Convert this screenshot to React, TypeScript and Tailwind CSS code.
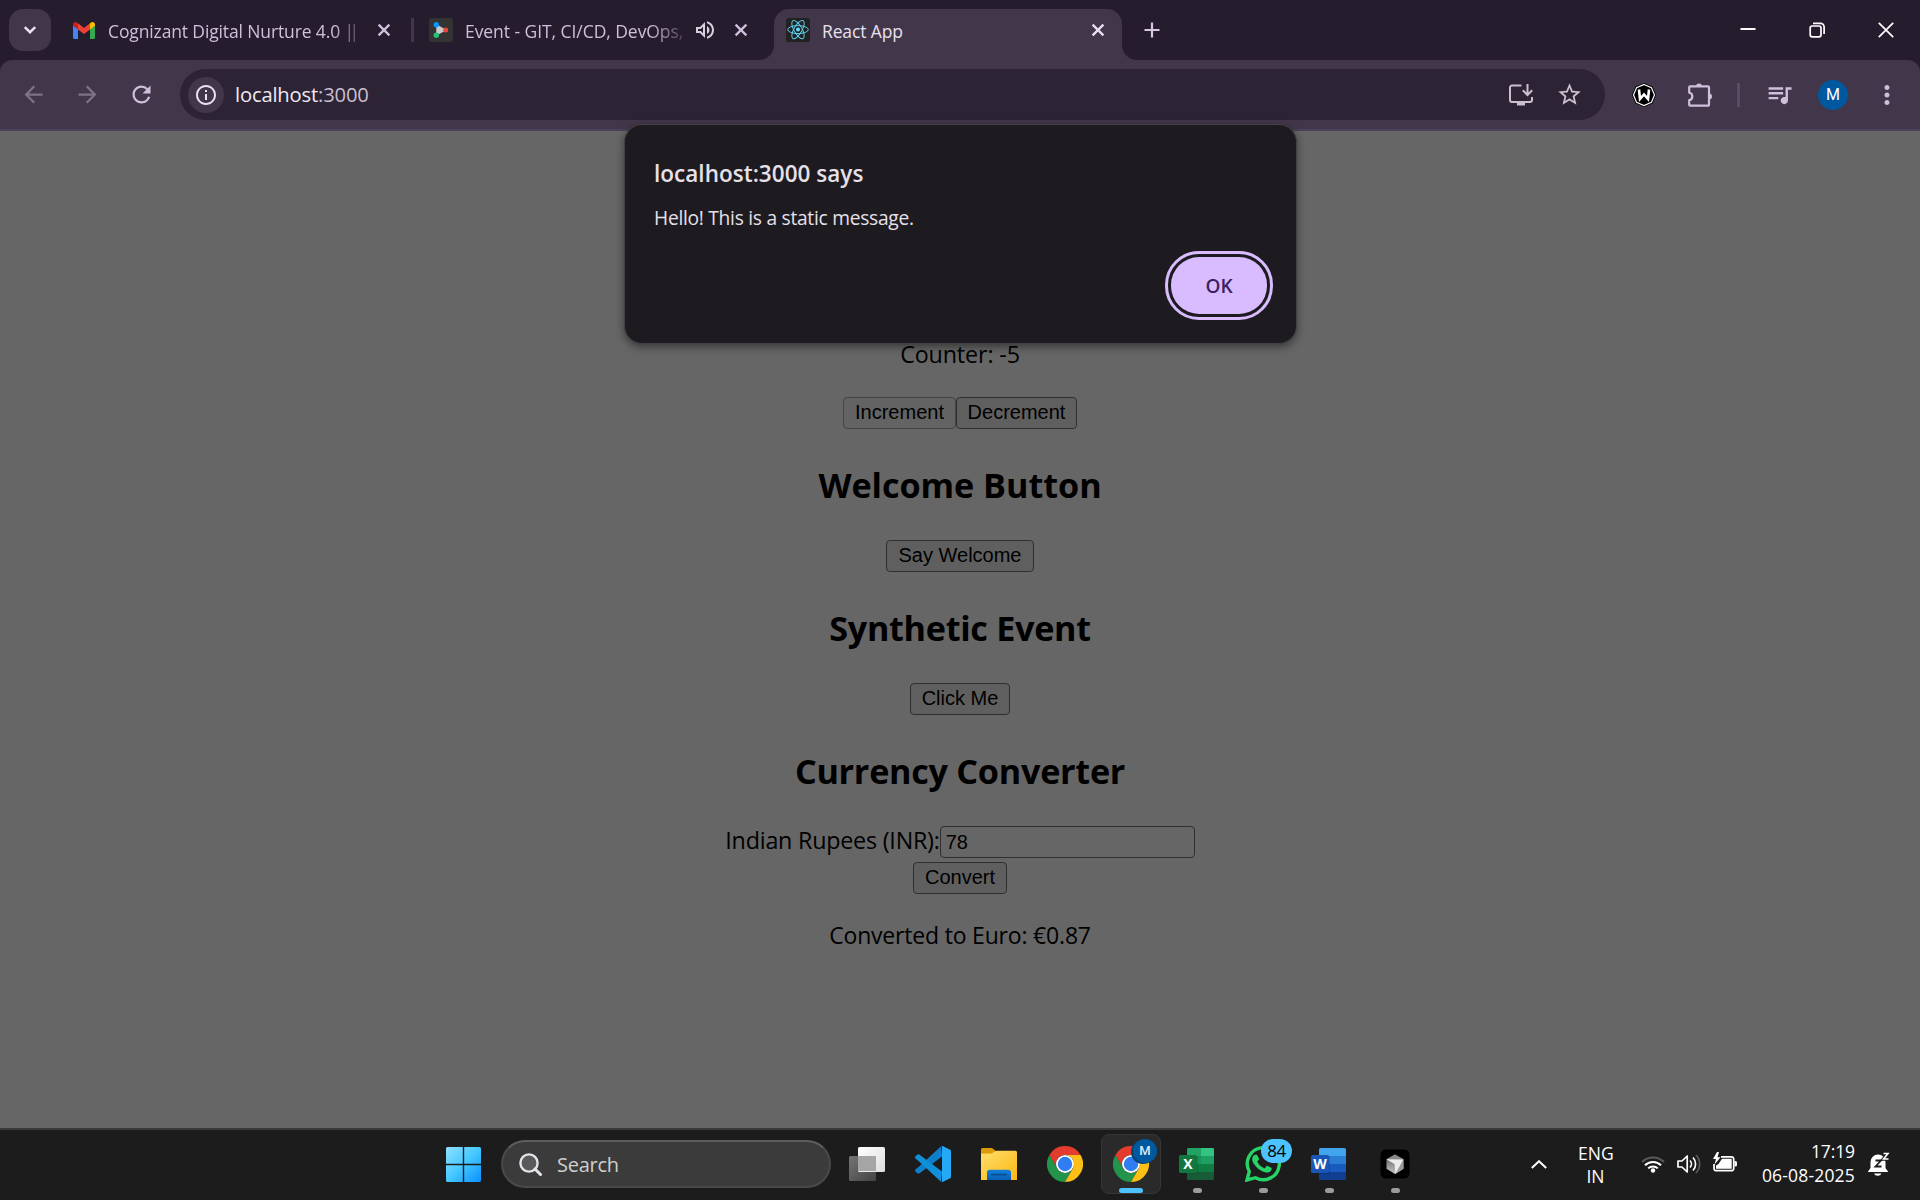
import type { ReactNode } from "react";
import {
  MdArrowBack,
  MdArrowForward,
  MdInfoOutline,
  MdMoreVert,
  MdOutlineVolumeUp,
  MdQueueMusic,
  MdRefresh,
  MdStarBorder,
} from "react-icons/md";

function CloseIcon({ className }: { className: string }) {
  return (
    <svg viewBox="0 0 12 12" className={`size-3 shrink-0 overflow-visible ${className}`} fill="none" stroke="currentColor" strokeWidth="2.3">
      <path d="M.6.6 11.4 11.4M11.4.6.6 11.4" />
    </svg>
  );
}

function GmailIcon() {
  return (
    <svg viewBox="0 0 22 17" className="h-[17px] w-[22px] shrink-0">
      <path d="M0 3.5 5 6.8V17H1.5A1.5 1.5 0 0 1 0 15.500Z" fill="#4285f4" />
      <path d="M22 3.500 17 6.800V17h3.500a1.500 1.500 0 0 0 1.500-1.500Z" fill="#34a853" />
      <path d="M17 1.300 11 5.900 5 1.300V7.400l6 4.600 6-4.600Z" fill="#ea4335" />
      <path d="M0 2.500V3.700L5 7.400V1.300L4 .6C2.300-.7 0 .4 0 2.500Z" fill="#c5221f" />
      <path d="M22 2.500V3.700L17 7.400V1.300L18 .6C19.700-.7 22 .4 22 2.500Z" fill="#fbbc04" />
    </svg>
  );
}

function EventIcon() {
  return (
    <svg viewBox="0 0 24 24" className="size-6 shrink-0">
      <rect width="24" height="24" rx="2" fill="#333" />
      <path d="M8 7.500 16 12 8 16.500Z" fill="#c9c9c9" stroke="#c9c9c9" strokeWidth="1.500" />
      <circle cx="7.300" cy="6.700" r="2.700" fill="#0a95ff" />
      <circle cx="7.300" cy="17.300" r="2.700" fill="#22c476" />
      <circle cx="16.700" cy="12" r="2.500" fill="#e8453c" />
    </svg>
  );
}

function ReactLogo() {
  return (
    <svg viewBox="0 0 24 24" className="size-6 shrink-0">
      <rect width="24" height="24" rx="2.500" fill="#222" />
      <g fill="none" stroke="#5ccfee" strokeWidth="1">
        <ellipse cx="12" cy="11.600" rx="10.300" ry="4" />
        <ellipse cx="12" cy="11.600" rx="10.300" ry="4" transform="rotate(60 12 11.600)" />
        <ellipse cx="12" cy="11.600" rx="10.300" ry="4" transform="rotate(120 12 11.600)" />
      </g>
      <circle cx="12" cy="11.600" r="2" fill="#61dafb" />
    </svg>
  );
}

function InstallIcon() {
  return (
    <svg viewBox="0 0 24 22" className="h-[22px] w-6" fill="none" stroke="currentColor" strokeWidth="2">
      <path d="M12.500 1.500H3A2 2 0 0 0 1 3.500V16A2 2 0 0 0 3 18H21A2 2 0 0 0 23 16V13" />
      <path d="M18.500 0V10.500M13.800 6.300 18.500 11 23.200 6.300" />
      <path d="M8 18H16V21.500H8Z" fill="currentColor" stroke="none" />
    </svg>
  );
}

function PuzzleIcon() {
  return (
    <svg viewBox="0 0 24 24" className="size-6">
      <path
        d="M2.200 3.300H19.800A1.200 1.200 0 0 1 21 4.500V21.500A1.200 1.200 0 0 1 19.800 22.700H2.200A1 1 0 0 1 1.200 21.700V17.300A4 4 0 0 0 1.200 9.500V4.300A1 1 0 0 1 2.200 3.300Z"
        fill="none"
        stroke="currentColor"
        strokeWidth="2.200"
      />
      <path d="M8 3.500A3 3 0 0 1 14 3.500ZM21 10.400A3 3 0 0 1 21 16.400Z" fill="currentColor" />
    </svg>
  );
}

function TabStrip() {
  return (
    <div className="flex h-[60px] items-center bg-[#251c2d] text-[17.5px] tracking-[-0.13px] text-[#d0bfdb]">
      <div className="ml-[9px] grid size-[42px] shrink-0 place-items-center rounded-[14px] bg-[#42374a]">
        <svg viewBox="0 0 12 8" className="h-2 w-3" fill="none" stroke="#ece2f2" strokeWidth="2.400">
          <path d="M.8 1 6 6.200 11.200 1" />
        </svg>
      </div>
      <div className="ml-[22px] flex w-[338px] shrink-0 items-center">
        <GmailIcon />
        <span className="mt-px ml-[13px] w-[256px] shrink-0 whitespace-nowrap mask-r-from-[88%] mask-r-to-[102%] leading-6">
          Cognizant Digital Nurture 4.0 <span className="tracking-[-4.500px]">||</span>
        </span>
        <CloseIcon className="ml-[14px]" />
      </div>
      <div className="h-6 w-[3px] shrink-0 bg-[#42374a]" />
      <div className="ml-[15px] flex w-[345px] shrink-0 items-center">
        <EventIcon />
        <span className="mt-px ml-3 w-[219px] shrink-0 whitespace-nowrap mask-r-from-[84%] mask-r-to-[104%] leading-6 tracking-[-0.060px]">
          Event - GIT, CI/CD, DevOps,
        </span>
        <MdOutlineVolumeUp className="ml-[9px] size-6 shrink-0 text-[#d8cfde]" />
        <CloseIcon className="ml-[18px]" />
      </div>
      <div className="relative flex h-[51px] w-[348px] shrink-0 items-center self-end rounded-t-[15px] bg-[#42374a] pb-[9px] pl-3 text-[#e9e0ee]">
        <span className="absolute bottom-0 -left-[15px] size-[15px] bg-[radial-gradient(circle_at_0_0,#251c2d_14.500px,#42374a_15.500px)]" />
        <span className="absolute -right-[15px] bottom-0 size-[15px] bg-[radial-gradient(circle_at_100%_0,#251c2d_14.500px,#42374a_15.500px)]" />
        <ReactLogo />
        <span className="mt-px ml-3 leading-6">React App</span>
        <CloseIcon className="mr-[18px] ml-auto" />
      </div>
      <svg viewBox="0 0 16 16" className="ml-[22px] size-4" stroke="#d6c6e2" strokeWidth="2.200">
        <path d="M8 .5v15M.5 8h15" />
      </svg>
      <div className="mr-[26.500px] ml-auto flex items-center gap-[53px]">
        <svg viewBox="0 0 16 16" className="size-4" stroke="#fff" strokeWidth="2">
          <path d="M.5 7h15" />
        </svg>
        <svg viewBox="0 0 16 16" className="size-4" fill="none" stroke="#fff" strokeWidth="1.700">
          <rect x="1.200" y="4" width="10.800" height="10.800" rx="2" />
          <path d="M4 1.300h7.500a3.600 3.600 0 0 1 3.600 3.600V12" />
        </svg>
        <svg viewBox="0 0 16 16" className="size-4" stroke="#fff" strokeWidth="1.700">
          <path d="M.8.800 15.200 15.200M15.200.800.800 15.200" />
        </svg>
      </div>
    </div>
  );
}

function Toolbar() {
  return (
    <div className="bg-[#251c2d]">
      <div className="flex h-[71px] items-start rounded-t-xl border-b-2 border-[#4d4056] bg-[#42374a] pt-[9px] text-[#d0bfdb]">
        <div className="flex h-[51px] w-[180px] shrink-0 items-center gap-[27px] pl-[19.500px] text-[27px]">
          <MdArrowBack className="text-[#7e7386]" />
          <MdArrowForward className="text-[#7e7386]" />
          <MdRefresh />
        </div>
        <div className="flex h-[51px] w-[1425px] shrink-0 items-center rounded-full bg-[#2c2334] pr-[22px] pl-[8px]">
          <div className="grid size-9 place-items-center rounded-full bg-[#42374a] text-2xl text-[#e9e0ee]">
            <MdInfoOutline />
          </div>
          <span className="-mt-0.5 ml-[11px] text-[20.200px] leading-6 tracking-[-0.170px] text-[#c9bfd0]">
            <span className="text-[#f0e9f4]">localhost</span>:3000
          </span>
          <div className="ml-auto text-[#c9bfcf]">
            <InstallIcon />
          </div>
          <MdStarBorder className="ml-[23px] size-[27px] text-[#c9bfcf]" />
        </div>
        <div className="flex h-[51px] flex-1 items-center pl-[27px]">
          <svg viewBox="0 0 24 24" className="size-6">
            <path d="M12 0 20.500 3.500 24 12 20.500 20.500 12 24 3.500 20.500 0 12 3.500 3.500Z" fill="#000" />
            <path d="M12 1.500 19.400 4.600 22.500 12 19.400 19.400 12 22.500 4.600 19.400 1.500 12 4.600 4.600Z" fill="none" stroke="#fff" strokeWidth="1.200" />
            <path d="M7 6.500 8 16 12 11.500 16 16 17 6.500" fill="none" stroke="#fff" strokeWidth="2.600" />
          </svg>
          <div className="ml-8">
            <PuzzleIcon />
          </div>
          <div className="ml-[25px] h-6 w-[3px] bg-[#5a4d63]" />
          <MdQueueMusic className="ml-[25px] size-[29px]" />
          <div className="ml-[24px] grid size-[30px] place-items-center rounded-full bg-[#00589f] font-[Roboto] text-base text-white">
            M
          </div>
          <MdMoreVert className="ml-[24px] size-[30px]" />
        </div>
      </div>
    </div>
  );
}

function PageButton({ className, children }: { className: string; children: ReactNode }) {
  return (
    <button
      className={`h-8 rounded-[4px] border pb-0.5 font-['Liberation_Sans',sans-serif] text-xl leading-7 whitespace-nowrap ${className}`}
    >
      {children}
    </button>
  );
}

function Heading({ className, children }: { className: string; children: ReactNode }) {
  return <h2 className={`mt-8 mb-[31px] text-[34.200px] leading-[48px] font-bold ${className}`}>{children}</h2>;
}

function Page() {
  return (
    <main className="flex h-[997px] flex-col items-center bg-[#666] pt-[205px] text-[23.300px] text-black">
      <p className="mb-[25px] leading-9 tracking-[-0.130px]">Counter: -5</p>
      <div className="flex">
        <PageButton className="w-[113px] border-[#444] bg-[#636363]">Increment</PageButton>
        <PageButton className="w-[121px] border-[#2f2f2f] bg-[#5f5f5f]">Decrement</PageButton>
      </div>
      <Heading className="tracking-[-0.050px]">Welcome Button</Heading>
      <PageButton className="w-[148px] border-[#2f2f2f] bg-[#5f5f5f]">Say Welcome</PageButton>
      <Heading className="tracking-[-0.300px]">Synthetic Event</Heading>
      <PageButton className="w-[100px] border-[#2f2f2f] bg-[#5f5f5f]">Click Me</PageButton>
      <Heading className="tracking-[-0.270px]">Currency Converter</Heading>
      <div className="mb-1 flex items-start">
        <label className="leading-7 tracking-[-0.220px]">Indian Rupees (INR):</label>
        <div className="flex h-8 w-[255px] items-center rounded-[4px] border border-[#2f2f2f] pl-[5px] font-['Liberation_Sans',sans-serif] text-xl">
          78
        </div>
      </div>
      <PageButton className="w-[94px] border-[#2f2f2f] bg-[#5f5f5f]">Convert</PageButton>
      <p className="mt-[23px] text-[23px] leading-9 tracking-[-0.190px]">Converted to Euro: €0.87</p>
    </main>
  );
}

function AlertDialog() {
  return (
    <div
      role="alertdialog"
      className="absolute top-[124px] left-[624px] flex h-[220px] w-[673px] flex-col rounded-[18px] border border-[#434146] bg-[#1e1b20] pt-[33px] pr-[23px] pl-[29px] text-[#e6e0e9] shadow-[0_3px_8px_rgba(0,0,0,0.450)]"
    >
      <h1 className="text-[22.500px] leading-8 font-semibold tracking-[0.030px]">localhost:3000 says</h1>
      <p className="mt-[14px] text-[19.200px] leading-7 tracking-[-0.270px]">Hello! This is a static message.</p>
      <button className="mt-[19px] h-[69px] w-[108px] self-end rounded-[34px] border-[3px] border-[#d9bcff] p-[3px]">
        <span className="flex h-full items-center justify-center rounded-[28px] bg-[#d9bcff] pt-0.5 text-[19px] font-semibold text-[#3b2160]">
          OK
        </span>
      </button>
    </div>
  );
}

function WindowsLogo() {
  return (
    <svg viewBox="0 0 35 35" className="-mt-px size-[35px]">
      <defs>
        <linearGradient id="win" gradientUnits="userSpaceOnUse" x1="0" y1="0" x2="35" y2="35">
          <stop offset="0" stopColor="#8fe0ff" />
          <stop offset=".5" stopColor="#45c8ff" />
          <stop offset="1" stopColor="#0a90ff" />
        </linearGradient>
      </defs>
      <path
        fill="url(#win)"
        d="M1.500 0H16.800V16.800H0V1.500A1.500 1.500 0 0 1 1.500 0ZM18.200 0H33.500A1.500 1.500 0 0 1 35 1.500V16.800H18.200ZM0 18.200H16.800V35H1.500A1.500 1.500 0 0 1 0 33.500ZM18.200 18.200H35V33.500A1.500 1.500 0 0 1 33.500 35H18.200Z"
      />
    </svg>
  );
}

function TaskViewIcon() {
  return (
    <svg viewBox="0 0 36 36" className="size-9">
      <defs>
        <linearGradient id="tvb" x1="0" y1="0" x2="1" y2="1">
          <stop offset="0" stopColor="#757575" />
          <stop offset="1" stopColor="#434343" />
        </linearGradient>
        <linearGradient id="tvf" x1="0" y1="0" x2="1" y2="1">
          <stop offset="0" stopColor="#fff" />
          <stop offset="1" stopColor="#dedede" />
        </linearGradient>
      </defs>
      <rect x="0" y="10" width="27" height="25" rx="1.500" fill="url(#tvb)" />
      <rect x="9" y="1" width="27" height="25" rx="1.500" fill="url(#tvf)" />
      <path d="M9 10H27V25H9Z" fill="#a5a5a5" />
    </svg>
  );
}

function VsCodeIcon() {
  return (
    <svg viewBox="0 0 36 36" className="size-9">
      <path d="M26 .2 3.300 21.200 .6 23.200C-.1 24-.1 25.300.6 26l1.900 1.300c.7.500 1.500.5 2.100 0L27 10.500Z" fill="#0f7fc9" />
      <path d="M26 35.800 3.300 14.800.6 12.800C-.1 12-.1 10.700.6 10L2.500 8.700c.7-.5 1.500-.5 2.100 0L27 25.500Z" fill="#1090d8" />
      <path d="M26 .2C26.600-.1 27.300 0 28 .3L34.800 3.400C35.500 3.800 36 4.500 36 5.300V30.700c0 .8-.5 1.500-1.200 1.900L28 35.700c-.7.300-1.400.400-2 .1.600.2 1-.3 1-1V1.200C27 .5 26.600 0 26 .2Z" fill="#25a8f5" />
    </svg>
  );
}

function FolderIcon() {
  return (
    <svg viewBox="0 0 36 36" className="size-9">
      <defs>
        <linearGradient id="fld" x1="0" y1="0" x2="1" y2="1">
          <stop offset="0" stopColor="#ffdf6e" />
          <stop offset="1" stopColor="#fcb712" />
        </linearGradient>
        <linearGradient id="fldb" x1="0" y1="0" x2="0" y2="1">
          <stop offset="0" stopColor="#1380dc" />
          <stop offset="1" stopColor="#0a5fb5" />
        </linearGradient>
      </defs>
      <path d="M0 3.500A1.500 1.500 0 0 1 1.500 2H11l4 3v6H0Z" fill="#dd9a06" />
      <path d="M0 7.500H10.500L15.500 4.700H34.500A1.500 1.500 0 0 1 36 6.200V34H0Z" fill="url(#fld)" />
      <path d="M6 34V26.500A2.800 2.800 0 0 1 8.800 23.700H27.200A2.800 2.800 0 0 1 30 26.500V34Z" fill="url(#fldb)" />
      <path d="M11 28.700H25" stroke="#0b4c91" strokeWidth="1.800" strokeLinecap="round" />
    </svg>
  );
}

function ChromeIcon() {
  return (
    <svg viewBox="0 0 36 36" className="size-9">
      <path d="M18 9H33.590A18 18 0 0 0 2.410 9L10.200 22.500A9 9 0 0 1 18 9Z" fill="#e33b2e" />
      <path d="M10.200 22.500 2.410 9A18 18 0 0 0 18 36L25.790 22.500A9 9 0 0 1 10.200 22.500Z" fill="#22954a" />
      <path d="M25.790 22.500 18 36A18 18 0 0 0 33.590 9H18A9 9 0 0 1 25.790 22.500Z" fill="#fcbf16" />
      <circle cx="18" cy="18" r="9" fill="#fff" />
      <circle cx="18" cy="18" r="7.200" fill="#2f7df0" />
    </svg>
  );
}

function OfficeIcon({ letter, rows, tile, split }: { letter: string; rows: string[]; tile: string; split?: string }) {
  return (
    <svg viewBox="0 0 36 36" className="size-9">
      <defs>
        <clipPath id={`doc${letter}`}>
          <rect x="8" y="2" width="27" height="32" rx="1.500" />
        </clipPath>
      </defs>
      <g clipPath={`url(#doc${letter})`}>
        {rows.map((c, i) => (
          <rect key={c} x="8" y={2 + i * 8} width="28" height="8.100" fill={c} />
        ))}
        {split && <path d="M22 2H36V10H22Z" fill={split} />}
        {split && <path d="M8 10H22V18H8ZM8 18H22V26H8Z" fill="#107c41" fillOpacity=".35" />}
      </g>
      <rect x="9" y="10" width="10" height="18" fill="#000" fillOpacity=".15" />
      <rect x="0" y="9" width="18" height="18" rx="1.500" fill={tile} />
      <text x="9" y="23" textAnchor="middle" fontFamily="Open Sans, sans-serif" fontWeight="700" fontSize="14" fill="#fff">
        {letter}
      </text>
    </svg>
  );
}

function WhatsAppIcon() {
  return (
    <svg viewBox="0 0 36 36" className="size-9">
      <path d="M2 34 4.300 25.500A16 16 0 1 1 10.500 31.700Z" fill="none" stroke="#26d366" strokeWidth="3.400" />
      <path
        d="M12.400 9.500c-.4-.8-.8-.8-1.200-.8h-1c-.4 0-1 .2-1.500.7-.6.600-1.500 1.900-1.500 4 0 2.200 1.600 4.400 1.900 4.700.200.300 3.300 5.300 8.200 7.200 4 1.600 4.900 1.300 5.800 1.200.9-.1 2.800-1.200 3.200-2.300.400-1.100.400-2.100.3-2.300-.1-.2-.4-.3-.9-.5l-3-1.500c-.4-.2-.8-.3-1.100.2l-1.500 1.900c-.3.300-.5.400-1 .1-2-.9-5.200-3-6.600-6.200-.3-.5 0-.7.200-1l1.200-1.500c.2-.4.200-.7 0-1Z"
        fill="#26d366"
      />
    </svg>
  );
}

function CursorIcon() {
  return (
    <svg viewBox="0 0 36 36" className="size-9">
      <defs>
        <linearGradient id="cur" x1="0" y1="0" x2="0" y2="1">
          <stop offset="0" stopColor="#5a5a5a" />
          <stop offset="1" stopColor="#c5c5c5" />
        </linearGradient>
      </defs>
      <rect x="3.500" y="3.500" width="29" height="29" rx="5.500" fill="#000" />
      <path d="M18 8.500 26.500 13.200V22.800L18 28 9.500 22.800V13.200Z" fill="url(#cur)" />
      <path d="M18 8.500 26.500 13.200 18 15 9.500 13.200Z" fill="#8a8a8a" />
      <path d="M9.500 13.200 26.500 13.500 18.500 28 17.500 18Z" fill="#ececec" />
      <path d="M26.500 13.500V22.800L18.500 28Z" fill="#9b9b9b" />
    </svg>
  );
}

function TaskItem({ dot, children }: { dot?: boolean; children: ReactNode }) {
  return (
    <div className="flex h-[70px] w-[66px] shrink-0 flex-col items-center pt-4">
      <div className="relative">{children}</div>
      {dot && <div className="mt-[6px] h-[5px] w-[9px] rounded-full bg-[#9b9b9b]" />}
    </div>
  );
}

function SystemTray() {
  return (
    <div className="mr-[30px] ml-auto flex h-[70px] items-center pb-0.5 text-[17.500px] text-white">
      <svg viewBox="0 0 16 9" className="mr-[31px] h-[9px] w-4" fill="none" stroke="#fff" strokeWidth="2">
        <path d="M.8 8 8 1.200 15.200 8" />
      </svg>
      <div className="mt-0.5 mr-[28px] w-[35px] text-center leading-[23px]">
        <div>ENG</div>
        <div>IN</div>
      </div>
      <svg viewBox="0 0 24 18" className="mr-3 h-[18px] w-6" fill="none" strokeWidth="2">
        <path d="M1 7A15.600 15.600 0 0 1 23 7" stroke="#5a5a5a" />
        <path d="M4 10.300A11.300 11.300 0 0 1 20 10.300M7.200 13.400A6.800 6.800 0 0 1 16.800 13.400" stroke="#fff" />
        <circle cx="12" cy="15.500" r="2.200" fill="#fff" />
      </svg>
      <svg viewBox="0 0 24 20" className="mr-3 h-5 w-6" fill="none" stroke="#fff" strokeWidth="1.700">
        <path d="M1 7H5L10.200 2V18L5 13H1Z" strokeLinejoin="round" />
        <path d="M13 6.500A5 5 0 0 1 13 13.500M16 3.500A9.500 9.500 0 0 1 16 16.500" />
        <path d="M19 1A13 13 0 0 1 19 19" stroke="#5a5a5a" />
      </svg>
      <svg viewBox="0 0 24 20" className="-mt-1 h-5 w-6">
        <path d="M8 4.800H18.500A2.200 2.200 0 0 1 20.700 7V16.500A2.200 2.200 0 0 1 18.500 18.700H3.200A2.200 2.200 0 0 1 1 16.500V12" fill="none" stroke="#fff" strokeWidth="1.700" />
        <path d="M21.500 9H22.500A1.500 1.500 0 0 1 24 10.500V13A1.500 1.500 0 0 1 22.500 14.500H21.500Z" fill="#fff" />
        <path d="M9 6.800H18.700V16.700H3V13.500L5.500 12Z" fill="#fff" />
        <path d="M4 0 0 7H3L1.500 12.500 7.500 5.300H4.500L6 0Z" fill="#fff" />
      </svg>
      <div className="w-[118px] text-right leading-6">
        <div className="-mt-0.5 tracking-[-0.100px]">17:19</div>
        <div className="tracking-[0.180px]">06-08-2025</div>
      </div>
      <svg viewBox="0 0 22 26" className="mb-px ml-[13px] h-[26px] w-[22px]">
        <path d="M2.500 11A7.500 7.500 0 0 1 10 3.500C14 3.500 17.500 7 17.500 11V17L20 20.500V21H0V20.500L2.500 17Z" fill="#fff" />
        <path d="M6 22.500H13.500A4 3.500 0 0 1 6 22.500Z" fill="#fff" />
        <path d="M7.500 9.500H13L7.500 15.500H13.500" fill="none" stroke="#1c1c1c" strokeWidth="1.800" />
        <path d="M15.500 2.500H20L15.600 8H20.500" fill="none" stroke="#1c1c1c" strokeWidth="3.600" />
        <path d="M15.500 2.500H20L15.600 8H20.500" fill="none" stroke="#fff" strokeWidth="1.600" />
      </svg>
    </div>
  );
}

function Taskbar() {
  return (
    <footer className="flex h-[72px] items-center border-t-2 border-[#3b3b3b] bg-[#1c1c1c] pl-[446px]">
      <WindowsLogo />
      <div className="mt-[-2px] mr-[3px] ml-5 flex h-12 w-[330px] shrink-0 items-center rounded-full border-2 border-[#4a4a4a] border-t-[#5d5d5d] bg-[#3b3b3b] pl-4">
        <svg viewBox="0 0 23 23" className="size-[23px]" fill="none" stroke="#e4e4e8" strokeWidth="2.400">
          <circle cx="10" cy="10" r="8.600" fill="#59595c" />
          <path d="M16 16 21.500 21.500" strokeWidth="3" strokeLinecap="round" />
        </svg>
        <span className="mt-0.5 ml-[15px] text-xl leading-7 tracking-[-0.250px] text-[#cfcfcf]">Search</span>
      </div>
      <TaskItem>
        <TaskViewIcon />
      </TaskItem>
      <TaskItem>
        <VsCodeIcon />
      </TaskItem>
      <TaskItem>
        <FolderIcon />
      </TaskItem>
      <TaskItem>
        <ChromeIcon />
      </TaskItem>
      <div className="flex h-[70px] w-[66px] shrink-0 justify-center pt-1">
        <div className="relative flex size-[60px] flex-col items-center rounded-lg border border-[#363636] bg-[#2a2a2a] pt-[11px]">
          <ChromeIcon />
          <div className="mt-[6px] h-[5px] w-6 shrink-0 rounded-full bg-[#4cc2ff]" />
          <span className="absolute top-[4px] left-[31px] grid size-6 place-items-center rounded-full bg-[#00589f] font-[Roboto] text-[13px] font-medium text-[#dbe9f5] shadow-[-2px_1px_0_#0a4170]">
            M
          </span>
        </div>
      </div>
      <TaskItem dot>
        <OfficeIcon letter="X" rows={["#21a366", "#1fa062", "#107c41", "#185c37"]} tile="#12773f" split="#33c481" />
      </TaskItem>
      <TaskItem dot>
        <WhatsAppIcon />
        <span className="absolute top-[-7px] left-4 flex h-6 w-[31px] items-center justify-center rounded-full bg-[#4cc2ff] text-[17px] tracking-[-0.500px] text-black">
          84
        </span>
      </TaskItem>
      <TaskItem dot>
        <OfficeIcon letter="W" rows={["#41a5ee", "#2b7cd3", "#185abd", "#103f91"]} tile="#1956b8" />
      </TaskItem>
      <TaskItem dot>
        <CursorIcon />
      </TaskItem>
      <SystemTray />
    </footer>
  );
}

export default function App() {
  return (
    <div className="relative flex h-[1200px] w-[1920px] flex-col overflow-hidden font-['Open_Sans',sans-serif]">
      <TabStrip />
      <Toolbar />
      <Page />
      <Taskbar />
      <AlertDialog />
    </div>
  );
}
